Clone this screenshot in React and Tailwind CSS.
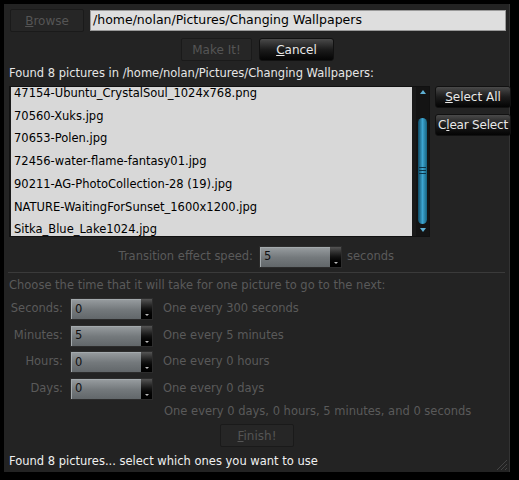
const files = [
  '47154-Ubuntu_CrystalSoul_1024x768.png',
  '70560-Xuks.jpg',
  '70653-Polen.jpg',
  '72456-water-flame-fantasy01.jpg',
  '90211-AG-PhotoCollection-28 (19).jpg',
  'NATURE-WaitingForSunset_1600x1200.jpg',
  'Sitka_Blue_Lake1024.jpg',
]

const times = [
  { label: 'Seconds:', val: '0', text: 'One every 300 seconds' },
  { label: 'Minutes:', val: '5', text: 'One every 5 minutes' },
  { label: 'Hours:', val: '0', text: 'One every 0 hours' },
  { label: 'Days:', val: '0', text: 'One every 0 days' },
]

function DarkButton({ children, className = '' }) {
  return (
    <div className={`flex items-center justify-center whitespace-nowrap rounded-[3px] border border-[#111] bg-gradient-to-b from-[#4a4a4a] via-[#1c1c1c] to-[#050505] text-[#e8e8e8] ${className}`}>
      {children}
    </div>
  )
}

function DisabledButton({ children, className = '' }) {
  return (
    <div className={`flex items-center justify-center whitespace-nowrap rounded-[2px] border border-[#1a1a1a] bg-[#262626] text-[#555] ${className}`}>
      {children}
    </div>
  )
}

function Spin({ val, className = '' }) {
  return (
    <div className={`flex h-[22px] w-[83px] border border-[#2c2c2c] ${className}`}>
      <div className="flex-1 flex items-center pl-[3px] bg-gradient-to-b from-[#959a9d] via-[#74797c] to-[#62676a] border-t border-l border-[#a4aaad] text-[#111]">
        {val}
      </div>
      <div className="w-[11px] flex items-end justify-center pb-[3px] bg-gradient-to-b from-[#555] via-[#111] to-[#000]">
        <div className="w-0 h-0 border-l-[2px] border-r-[2px] border-t-[2px] border-l-transparent border-r-transparent border-t-[#bbb]" />
      </div>
    </div>
  )
}

export default function App() {
  return (
    <div className="w-[519px] h-[480px] bg-black pt-[4px] pl-[4px]" style={{ fontFamily: '"DejaVu Sans", sans-serif' }}>
      <div className="relative w-[506px] h-[468px] bg-[#232323] border-r border-[#333] text-[11.5px] leading-none">
        {/* path row */}
        <div className="flex items-center pt-[5px] pl-[6px]">
          <DisabledButton className="w-[74px] h-[23px] text-[12px]">
            <span><span className="underline">B</span>rowse</span>
          </DisabledButton>
          <div className="ml-[6px] w-[416px] h-[21px] bg-[#dedede] border border-[#9a9a9a] flex items-center pl-[2px] text-black text-[12.5px]">
            /home/nolan/Pictures/Changing Wallpapers
          </div>
        </div>

        {/* make it row */}
        <div className="flex pt-[6px] pl-[177px] gap-[7px] text-[12px]">
          <DisabledButton className="w-[71px] h-[23px]">Make It!</DisabledButton>
          <DarkButton className="w-[75px] h-[23px]">
            <span><span className="underline">C</span>ancel</span>
          </DarkButton>
        </div>

        <div className="pl-[5px] pt-[7px] text-[#e6e6e6]">
          Found 8 pictures in /home/nolan/Pictures/Changing Wallpapers:
        </div>

        {/* list area */}
        <div className="flex pl-[5px] pt-[6px]">
          <div className="flex w-[421px] h-[151px] bg-[#1a1a1a] border border-[#111]">
            <div className="w-[402px] h-[149px] ml-[1px] bg-[#d8d8d8] overflow-hidden text-black">
              <div className="-mt-[4px]">
                {files.map((f, i) => (
                  <div key={i} className="h-[22.7px] flex items-center pl-[3px]">{f}</div>
                ))}
              </div>
            </div>
            <div className="ml-[4px] w-[13px] h-[149px] bg-[#141414] flex flex-col items-center">
              <div className="mt-[3px] w-0 h-0 border-l-[3px] border-r-[3px] border-b-[4px] border-l-transparent border-r-transparent border-b-[#5fb0d4]" />
              <div className="mt-[24px] w-[9px] h-[106px] rounded-full bg-gradient-to-r from-[#0e4b66] via-[#3da5d0] to-[#16627f] flex flex-col items-center justify-center gap-[2px]">
                <div className="w-[7px] h-[1px] bg-[#0c3347]" />
                <div className="w-[7px] h-[1px] bg-[#0c3347]" />
                <div className="w-[7px] h-[1px] bg-[#0c3347]" />
              </div>
              <div className="mt-[4px] w-0 h-0 border-l-[3px] border-r-[3px] border-t-[4px] border-l-transparent border-r-transparent border-t-[#5fb0d4]" />
            </div>
          </div>
          <div className="ml-[5px] flex flex-col gap-[6px] text-[12px]">
            <DarkButton className="w-[76px] h-[22px]">
              <span><span className="underline">S</span>elect All</span>
            </DarkButton>
            <DarkButton className="w-[76px] h-[22px] tracking-[-0.2px]">
              <span>C<span className="underline">l</span>ear Select</span>
            </DarkButton>
          </div>
        </div>

        {/* transition speed */}
        <div className="flex items-center pt-[9px] h-[31px]">
          <div className="w-[249px] text-right text-[#5a5a5a]">Transition effect speed:</div>
          <Spin val="5" className="ml-[6px]" />
          <div className="ml-[5px] text-[#5a5a5a]">seconds</div>
        </div>
        <div className="mt-[4px] mx-[4px] h-[1px] bg-[#3a3a3a]" />

        <div className="pl-[5px] pt-[7px] text-[#5a5a5a]">
          Choose the time that it will take for one picture to go to the next:
        </div>

        <div className="flex flex-col gap-[4.5px] pt-[7px]">
          {times.map((t) => (
            <div key={t.label} className="flex items-center h-[22px]">
              <div className="w-[59px] text-right text-[#5a5a5a]">{t.label}</div>
              <Spin val={t.val} className="ml-[7px]" />
              <div className="ml-[10px] text-[#5a5a5a]">{t.text}</div>
            </div>
          ))}
        </div>

        <div className="pl-[160px] pt-[6px] text-[#5a5a5a]">
          One every 0 days, 0 hours, 5 minutes, and 0 seconds
        </div>

        <div className="flex pl-[216px] pt-[7px] text-[12px]">
          <DisabledButton className="w-[74px] h-[23px]">
            <span><span className="underline">F</span>inish!</span>
          </DisabledButton>
        </div>

        <div className="pl-[5px] pt-[9px] text-[#f0f0f0]">
          Found 8 pictures... select which ones you want to use
        </div>

        <svg className="absolute right-[1px] bottom-[1px]" width="14" height="14" viewBox="0 0 14 14">
          <path d="M13 3 L3 13 M13 7 L7 13 M13 11 L11 13" stroke="#444" strokeWidth="1" />
        </svg>
      </div>
    </div>
  )
}
